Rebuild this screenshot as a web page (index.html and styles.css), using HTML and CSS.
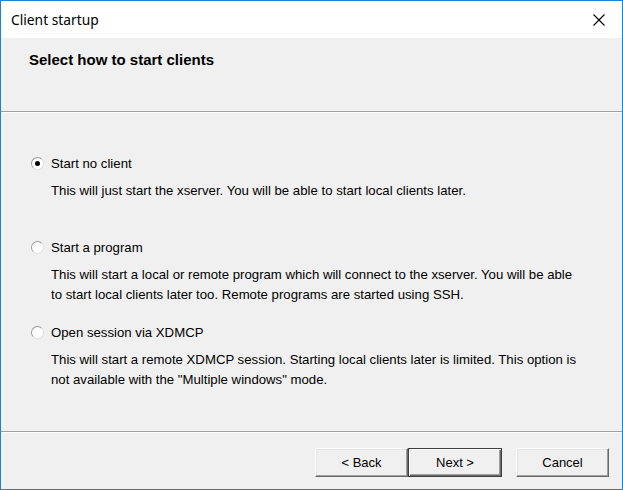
FILE: index.html
```html
<!DOCTYPE html>
<html>
<head>
<meta charset="utf-8">
<link rel="stylesheet" href="styles.css">
</head>
<body>
<div class="window">
  <div class="titlebar">
    <span class="title">Client startup</span>
    <svg class="close" width="12" height="12" viewBox="0 0 12 12"><path d="M0.5 0.5 L11.5 11.5 M11.5 0.5 L0.5 11.5" stroke="#000" stroke-width="1.1" fill="none"/></svg>
  </div>
  <div class="header">
    <div class="heading">Select how to start clients</div>
  </div>
  <div class="content">
    <div class="option">
      <div class="row"><span class="radio checked"></span><span class="label">Start no client</span></div>
      <div class="desc">This will just start the xserver. You will be able to start local clients later.</div>
    </div>
    <div class="option">
      <div class="row"><span class="radio"></span><span class="label">Start a program</span></div>
      <div class="desc">This will start a local or remote program which will connect to the xserver. You will be able<br>to start local clients later too. Remote programs are started using SSH.</div>
    </div>
    <div class="option">
      <div class="row"><span class="radio"></span><span class="label">Open session via XDMCP</span></div>
      <div class="desc">This will start a remote XDMCP session. Starting local clients later is limited. This option is<br>not available with the "Multiple windows" mode.</div>
    </div>
  </div>
  <div class="footer">
    <div class="btn-pair">
      <button class="btn">&lt; Back</button>
      <button class="btn default">Next &gt;</button>
    </div>
    <button class="btn">Cancel</button>
  </div>
</div>
</body>
</html>
```
FILE: styles.css
```css
html, body {
  margin: 0;
  padding: 0;
  background: #f0f0f0;
}
.window {
  width: 623px;
  height: 490px;
  box-sizing: border-box;
  border: 1px solid #1883d7;
  background: #f0f0f0;
  display: flex;
  flex-direction: column;
  font-family: "Liberation Sans", Arial, sans-serif;
  color: #000;
}
.titlebar {
  height: 37px;
  background: #fff;
  display: flex;
  align-items: center;
  justify-content: space-between;
  padding: 0 17px 0 10px;
  flex: none;
}
.title {
  font-family: "Noto Sans", "Open Sans", sans-serif;
  font-size: 13.8px;
  color: #000;
}
.close {
  display: block;
}
.header {
  height: 74px;
  box-sizing: border-box;
  padding: 13px 0 0 28px;
  border-bottom: 1px solid #a0a0a0;
  box-shadow: 0 1px 0 #fff;
  flex: none;
}
.heading {
  font-weight: bold;
  font-size: 15px;
  line-height: 18px;
  color: #000;
}
.content {
  flex: 1;
  padding: 40px 0 0 30px;
  border-bottom: 1px solid #a0a0a0;
  box-shadow: 0 1px 0 #fff;
  margin-top: 1px;
  display: grid;
  grid-template-rows: 84px 85px 85px;
  align-content: start;
}
.row {
  display: flex;
  align-items: center;
  height: 20px;
}
.radio {
  width: 11px;
  height: 11px;
  border-radius: 50%;
  border: 1px solid #9a9a9a;
  border-right-color: #e0e0e0;
  border-bottom-color: #e0e0e0;
  background: #fff;
  box-sizing: content-box;
  position: relative;
  margin-right: 7px;
}
.radio.checked::after {
  content: "";
  position: absolute;
  width: 5px;
  height: 5px;
  border-radius: 50%;
  background: #000;
  left: 3px;
  top: 3px;
}
.label, .desc {
  font-size: 13.2px;
  color: #000;
}
.desc {
  margin: 8px 0 0 20px;
  line-height: 20px;
}
.footer {
  height: 56px;
  box-sizing: border-box;
  padding: 15px 13px 0 0;
  margin-top: 1px;
  display: flex;
  justify-content: flex-end;
  align-items: flex-start;
  gap: 14px;
  flex: none;
}
.btn-pair {
  display: flex;
}
.btn {
  width: 93px;
  height: 29px;
  box-sizing: border-box;
  font-family: "Liberation Sans", Arial, sans-serif;
  font-size: 13px;
  color: #000;
  background: #f0f0f0;
  border: 1px solid;
  border-color: #fff #696969 #696969 #fff;
  box-shadow: inset -1px -1px 0 #a0a0a0, inset 1px 1px 0 #e3e3e3;
  padding: 0;
  margin: 0;
}
.btn.default {
  width: 94px;
  border-color: #404040;
  box-shadow: inset 1px 1px 0 #fff, inset -1px -1px 0 #696969, inset -2px -2px 0 #a0a0a0;
}
```
